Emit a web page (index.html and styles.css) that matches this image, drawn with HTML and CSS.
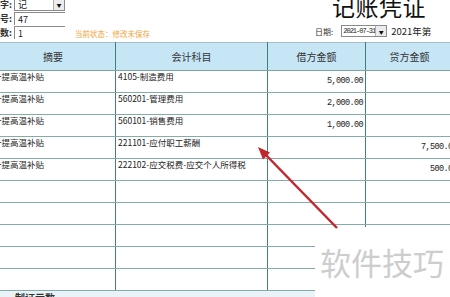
FILE: index.html
```html
<!DOCTYPE html>
<html>
<head>
    <meta charset="utf-8">
    <title>记账凭证</title>
    <link rel="stylesheet" href="styles.css">
</head>
<body>
    <div class="page">
        <div class="top">
            <div class="form">
                <span class="lbl">凭证字:</span>
                <span class="field select"><span class="val">记</span><span class="drop">▼</span></span>
                <span class="lbl">凭证号:</span>
                <span class="field">47</span>
                <span class="lbl">附单据数:</span>
                <span class="field">1</span>
            </div>
            <div class="status">当前状态：修改未保存</div>
            <div class="head">
                <div class="title">记账凭证</div>
                <div class="date-row">
                    <span class="date-lbl">日期:</span>
                    <span class="date-box"><span class="date-val">2021-07-31</span><span class="drop">▼</span></span>
                    <span class="period">2021年第</span>
                </div>
            </div>
        </div>

        <table class="voucher">
            <colgroup>
                <col class="c-sum">
                <col class="c-acct">
                <col class="c-debit">
                <col class="c-credit">
            </colgroup>
            <thead>
                <tr>
                    <th>摘要</th>
                    <th>会计科目</th>
                    <th>借方金额</th>
                    <th>贷方金额</th>
                </tr>
            </thead>
            <tbody>
                <tr><td>计提高温补贴</td><td>4105-制造费用</td><td class="amt">5,000.00</td><td class="amt"></td></tr>
                <tr><td>计提高温补贴</td><td>560201-管理费用</td><td class="amt">2,000.00</td><td class="amt"></td></tr>
                <tr><td>计提高温补贴</td><td>560101-销售费用</td><td class="amt">1,000.00</td><td class="amt"></td></tr>
                <tr><td>计提高温补贴</td><td>221101-应付职工薪酬</td><td class="amt"></td><td class="amt">7,500.00</td></tr>
                <tr><td>计提高温补贴</td><td>222102-应交税费-应交个人所得税</td><td class="amt"></td><td class="amt">500.00</td></tr>
                <tr><td></td><td></td><td></td><td></td></tr>
                <tr><td></td><td></td><td></td><td></td></tr>
                <tr><td></td><td></td><td></td><td></td></tr>
                <tr><td></td><td></td><td></td><td></td></tr>
                <tr><td></td><td></td><td></td><td></td></tr>
            </tbody>
        </table>
        <div class="foot">制证示数</div>

        <!-- watermark patch over the lower right -->
        <div class="watermark">软件技巧</div>

        <!-- red pointer arrow -->
        <svg class="arrow" width="450" height="297" viewBox="0 0 450 297">
            <line x1="264" y1="153" x2="337" y2="228" stroke="#c1272d" stroke-width="2.5"/>
            <polygon points="258,147 263,159.5 270,152.5" fill="#c1272d"/>
        </svg>
    </div>
</body>
</html>
```

FILE: styles.css
```css
body {
    margin: 0;
    background-color: #ffffff;
    font-family: "Noto Sans CJK SC", sans-serif;
    color: #222;
    overflow: hidden;
}
.page {
    position: relative;
    width: 450px;
    height: 297px;
    overflow: hidden;
}
.top {
    display: flex;
    height: 42px;
    background-color: #ffffff;
}
.form {
    display: grid;
    grid-template-columns: 40px 51px;
    grid-auto-rows: 13px;
    row-gap: 1px;
    column-gap: 2px;
    margin-left: -28px;
    margin-top: -2px;
    font-size: 9px;
    line-height: 13px;
}
.lbl {
    text-align: right;
    font-weight: bold;
    color: #333;
    white-space: nowrap;
}
.field {
    display: flex;
    align-items: center;
    padding-left: 3px;
    border-top: 1px solid #8a8a8a;
    border-left: 1px solid #8a8a8a;
    background-color: #fff;
    color: #222;
}
.field.select {
    justify-content: space-between;
    border: 1px solid #8a8a8a;
    padding-right: 0;
}
.drop {
    display: flex;
    align-items: center;
    justify-content: center;
    width: 10px;
    height: 100%;
    font-size: 5px;
    background-color: #ececec;
    border-left: 1px solid #b0b0b0;
    color: #111;
}
.status {
    align-self: flex-end;
    margin-left: 10px;
    margin-bottom: 4px;
    font-size: 7.5px;
    line-height: 9px;
    color: #f2a43c;
    white-space: nowrap;
}
.head {
    margin-left: auto;
    width: 135px;
    flex-shrink: 0;
}
.title {
    margin-top: -6px;
    padding-left: 17px;
    font-size: 23px;
    line-height: 24px;
    color: #111;
    letter-spacing: 0.5px;
}
.date-row {
    display: flex;
    align-items: center;
    margin-top: 7px;
    height: 12px;
    white-space: nowrap;
}
.date-lbl {
    font-size: 8px;
    color: #333;
}
.date-box {
    display: flex;
    align-items: center;
    justify-content: space-between;
    margin-left: 8px;
    width: 46px;
    height: 12px;
    border: 1px solid #8a8a8a;
    box-sizing: border-box;
}
.date-val {
    padding-left: 1px;
    font-family: "Liberation Mono", monospace;
    font-size: 7px;
    letter-spacing: -1px;
    color: #222;
}
.period {
    margin-left: 4px;
    font-size: 9.5px;
    color: #222;
}
.voucher {
    margin-left: -10px;
    width: 469px;
    table-layout: fixed;
    border-collapse: collapse;
    font-size: 8.5px;
}
.c-sum { width: 125px; }
.c-acct { width: 152px; }
.c-debit { width: 98px; }
.c-credit { width: 94px; }
.voucher th {
    height: 27px;
    padding: 0;
    font-size: 10px;
    font-weight: normal;
    color: #333;
    background-color: #c6e6f6;
    border-top: 1px solid #a9bfc8;
    border-bottom: 1px solid #7ea5a5;
    border-left: 1px solid #3f7f80;
    border-right: 1px solid #3f7f80;
}
.voucher th:last-child {
    padding-right: 6px;
}
.voucher td {
    height: 21px;
    padding: 0 2px;
    vertical-align: top;
    line-height: 11px;
    white-space: nowrap;
    overflow: hidden;
    border-top: 1px solid #86abab;
    border-bottom: 1px solid #86abab;
    border-left: 1px solid #3f7f80;
    border-right: 1px solid #3f7f80;
}
.voucher td:first-child {
    padding-left: 2px;
}
.voucher td.amt {
    vertical-align: middle;
    text-align: right;
    font-family: "Liberation Mono", monospace;
    font-size: 8.5px;
    letter-spacing: -0.6px;
    padding-right: 2px;
}
.foot {
    height: 10px;
    padding-left: 15px;
    padding-top: 1px;
    background-color: #eaf4f8;
    font-size: 10px;
    font-weight: bold;
    line-height: 12px;
    color: #333;
}
.watermark {
    position: absolute;
    left: 315px;
    top: 227px;
    width: 135px;
    height: 70px;
    padding: 18px 0 0 5px;
    box-sizing: border-box;
    background-color: #ffffff;
    font-size: 31px;
    line-height: 34px;
    color: #cdcdcd;
    white-space: nowrap;
}
.arrow {
    position: absolute;
    left: 0;
    top: 0;
}
```
